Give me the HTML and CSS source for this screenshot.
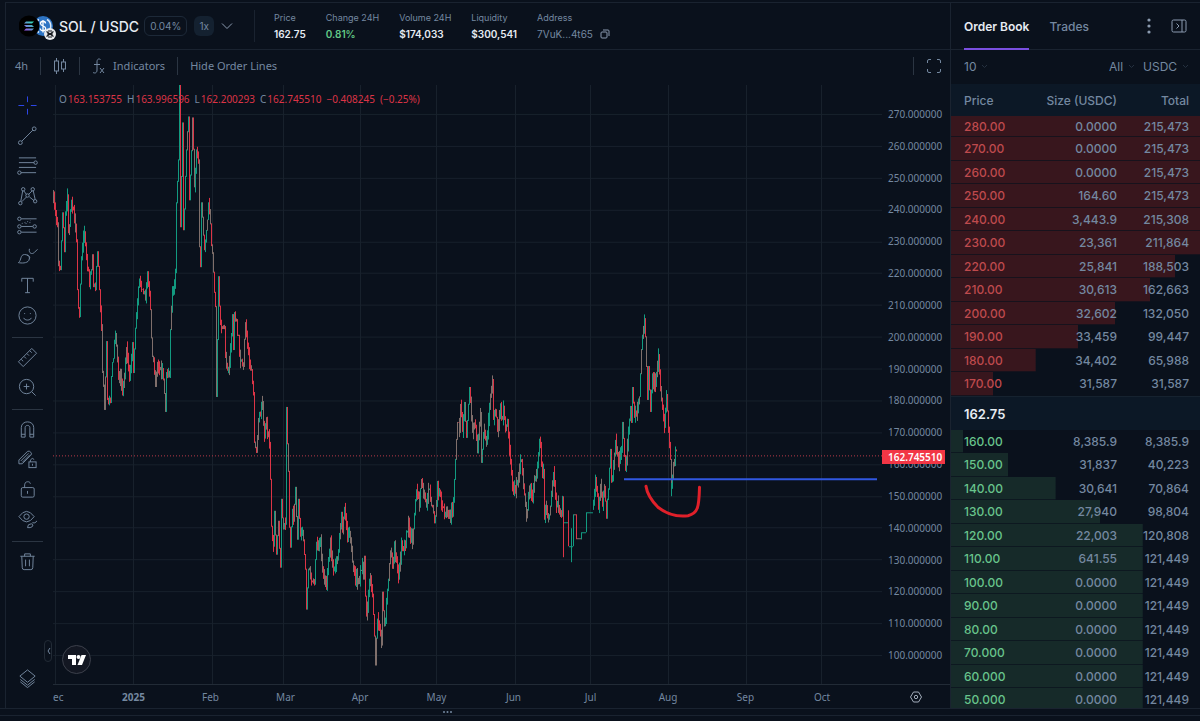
FILE: index.html
```html
<!DOCTYPE html>
<html lang="en">
<head>
    <meta charset="UTF-8">
    <meta name="viewport" content="width=device-width, initial-scale=1.0">
    <title>SOL / USDC</title>
    <link rel="stylesheet" href="styles.css">
</head>
<body>
    <div class="app">
        <main class="market">
            <header class="pair-bar">
                <svg class="pair-logo" width="38" height="26" viewBox="0 0 38 26">
                    <defs>
                        <linearGradient id="sol" x1="0" y1="1" x2="1" y2="0">
                            <stop offset="0" stop-color="#a04bf0"/>
                            <stop offset="1" stop-color="#22e6b0"/>
                        </linearGradient>
                    </defs>
                    <circle cx="24" cy="11" r="10" fill="#2d74c4"/>
                    <path d="M20 4.500a7.500 7.500 0 0 0 0 13M28 4.500a7.500 7.500 0 0 1 0 13" fill="none" stroke="#dbe8f8" stroke-width="1.500"/>
                    <path d="M26.500 8.500c0-3-5-3-5 0 0 3 5.200 2 5.200 5 0 3-5.400 3-5.400 0M24 5v12.500" fill="none" stroke="#fff" stroke-width="1.300"/>
                    <circle cx="10" cy="11" r="10.500" fill="#000"/>
                    <path d="M7 6.500h8l-2 2H5zM5 10h8l2 2H7zM7 13.500h8l-2 2H5z" fill="url(#sol)"/>
                    <circle cx="31" cy="19" r="6" fill="#e9ebee"/>
                    <path d="M27.500 16.500l7 5M34.500 16.500l-7 5M28 19h6M29 16h4M29 22h4" stroke="#15181e" stroke-width="1.200"/>
                </svg>
                <h1>SOL / USDC</h1>
                <span class="tag outlined">0.04%</span>
                <span class="tag">1x</span>
                <button class="icon-button" aria-label="Choose pair">
                    <svg width="12" height="8" viewBox="0 0 12 8"><path d="M1 1.500l5 5 5-5"/></svg>
                </button>
                <dl class="stats">
                    <div><dt>Price</dt><dd>162.75</dd></div>
                    <div><dt>Change 24H</dt><dd class="up">0.81%</dd></div>
                    <div><dt>Volume 24H</dt><dd>$174,033</dd></div>
                    <div><dt>Liquidity</dt><dd>$300,541</dd></div>
                    <div><dt>Address</dt><dd class="address">7VuK...4t65
                        <button class="icon-button" aria-label="Copy address">
                            <svg width="10" height="10" viewBox="0 0 10 10"><rect x="1" y="3" width="6" height="6" rx="1"/><path d="M3 1h5q1 0 1 1v5"/></svg>
                        </button></dd></div>
                </dl>
            </header>

            <div class="chart-toolbar">
                <button>4h</button>
                <i class="divider"></i>
                <button aria-label="Candles">
                    <svg width="14" height="18" viewBox="0 0 14 18"><path d="M3.500 1v3M3.500 14v3M10.500 2v3M10.500 12v3"/><rect x="1.500" y="4" width="4" height="10"/><rect x="8.500" y="5" width="4" height="7"/></svg>
                </button>
                <i class="divider"></i>
                <button class="indicators">
                    <svg width="14" height="18" viewBox="0 0 14 18"><path d="M8.500 2.500C6 1 5 3 5 5v8c0 3-2 3.500-4 2.500M2 7.500h6M8 11l4 5M12 11l-4 5"/></svg>
                    Indicators
                </button>
                <i class="divider"></i>
                <button>Hide Order Lines</button>
                <span class="spacer"></span>
                <i class="divider"></i>
                <button aria-label="Fullscreen">
                    <svg width="16" height="16" viewBox="0 0 16 16"><path d="M1.500 5V3q0-1.500 1.500-1.500h2M11 1.500h2q1.500 0 1.500 1.500v2M14.500 11v2q0 1.500-1.500 1.500h-2M5 14.500H3q-1.500 0-1.500-1.500v-2"/></svg>
                </button>
            </div>

            <div class="chart-body">
                <nav class="tools" aria-label="Drawing tools">
                    <button class="active" aria-label="Crosshair"><svg viewBox="0 0 22 22"><path d="M11 1.500v6M11 14.500v6M1.500 11h6M14.500 11h6"/></svg></button>
                    <button aria-label="Trend line"><svg viewBox="0 0 22 22"><path d="M5 17L16.500 5.500"/><circle cx="3.500" cy="18.500" r="2"/><circle cx="18" cy="4" r="2"/></svg></button>
                    <button aria-label="Fib retracement"><svg viewBox="0 0 22 22"><path d="M2 3h18M2 8h16M2 13h18M4 18.500h16"/><circle cx="19.500" cy="8" r="1.800"/><circle cx="2.500" cy="18.500" r="1.800"/></svg></button>
                    <button aria-label="Patterns"><svg viewBox="0 0 22 22"><path d="M4 17L6 6M7 6l3 4M5 17.500l5-5M12 10l4-4M13 12.500l5 4M17 6l2 9"/><circle cx="6.500" cy="4.500" r="1.800"/><circle cx="16.500" cy="4.500" r="1.800"/><circle cx="11" cy="11" r="1.800"/><circle cx="3.500" cy="19" r="1.800"/><circle cx="19" cy="17" r="1.800"/></svg></button>
                    <button aria-label="Position"><svg viewBox="0 0 22 22"><path d="M4.500 4h16M4.500 12h12M4.500 18h16"/><path d="M5 9l9-3M9 9h1M13 8h1"  stroke-dasharray="1 2"/><circle cx="2.500" cy="4" r="1.800"/><circle cx="2.500" cy="12" r="1.800"/><circle cx="18.500" cy="12" r="1.800"/><circle cx="2.500" cy="18" r="1.800"/></svg></button>
                    <button aria-label="Brush"><svg viewBox="0 0 22 22"><path d="M1.500 18.500C5 16 3 10 8 10c4 0 6 3 4.500 6-2 3.500-8 3-11 2.500zM13 4c-1 5 3 6 5 4l3.500-3.500M10.500 10.500c3 .5 3.500 3 2 4.500"/></svg></button>
                    <button aria-label="Text"><svg viewBox="0 0 22 22"><path d="M5 7V3.500h12V7M11 3.500v15M8.500 18.500h5"/></svg></button>
                    <button aria-label="Icons"><svg viewBox="0 0 22 22"><circle cx="11" cy="11" r="9"/><path d="M7 13.500c1 3 7 3 8 0M8 8.500v1M14 8.500v1"/></svg></button>
                    <hr>
                    <button aria-label="Measure"><svg viewBox="0 0 22 22"><path d="M1.500 15.500l14-14 5 5-14 14zM4.500 13l2 2M7.500 10l2 2M10.500 7l2 2M13.500 4l2 2"/></svg></button>
                    <button aria-label="Zoom in"><svg viewBox="0 0 22 22"><circle cx="10" cy="10" r="7.500"/><path d="M15.500 15.500l4 4M10 7v6M7 10h6"/></svg></button>
                    <hr>
                    <button aria-label="Magnet"><svg viewBox="0 0 22 22"><path d="M4.500 19V9c0-8 13-8 13 0v10h-4V9c0-3-5-3-5 0v10zM4.500 16h4M13.500 16h4"/></svg></button>
                    <button aria-label="Keep drawing"><svg viewBox="0 0 22 22"><path d="M2 15.500v-4l9-9q2-1 3.500 1 1.500 1.500 0 3l-9 9zM4 12.500l8-8M5.500 14l8-8"/><rect x="12.500" y="13.500" width="7.500" height="6"/><path d="M14 13.500v-2q2-3 4-.5M16.200 15.500v2"/></svg></button>
                    <button aria-label="Lock"><svg viewBox="0 0 22 22"><rect x="4.500" y="9" width="13.500" height="10" rx="1.500"/><path d="M8 9V6c0-4 6-4 6-1M11 12.500v3"/></svg></button>
                    <button aria-label="Hide drawings"><svg viewBox="0 0 22 22"><path d="M2 8q8-11 16 0-8 11-16 0z"/><circle cx="10" cy="8" r="2.800"/><path d="M11 19.500q0-4 4-4 3 1 1 3-2 1.500-5 1zM16 14.500q3 1 5-2"/></svg></button>
                    <hr>
                    <button aria-label="Remove"><svg viewBox="0 0 22 22"><path d="M3.500 5.500h15M8 5.500V3h6v2.500M5 5.500l.5 12q0 2 2 2h7q2 0 2-2l.5-12M9 9v7M13 9v7"/></svg></button>
                    <button class="last" aria-label="Objects"><svg viewBox="0 0 22 22"><path d="M3 8.500L11 2l8 6.500-8 6.500zM3.500 12l7.500 6 7.500-6M3.500 14.500l7.500 6 7.500-6"/></svg></button>
                </nav>

                <div class="plot">
                    <svg id="chart" viewBox="53 85 829 600" preserveAspectRatio="none">
                        <g id="grid"></g>
                        <g id="candles"></g>
                        <path class="last-price" d="M53 456.500H882"/>
                        <path class="support" d="M624 480H877"/>
                        <path class="scribble" d="M646 487C647 494 652 502 658 508C667 515 676 518 688 516.500C698 514 699 508 699.500 488"/>
                    </svg>
                    <p class="ohlc">
                        <span>O<b>163.153755</b></span>
                        <span>H<b>163.996596</b></span>
                        <span>L<b>162.200293</b></span>
                        <span>C<b>162.745510</b></span>
                        <b>−0.408245</b>
                        <b>(−0.25%)</b>
                    </p>
                    <button class="collapse" aria-label="Collapse tools">
                        <svg width="4" height="8" viewBox="0 0 4 8"><path d="M3 1L1 4l2 3"/></svg>
                    </button>
                    <a class="tv-logo" href="#" aria-label="TradingView">
                        <svg width="18" height="10" viewBox="0 0 18 10"><path d="M0 0h8v10H4V4H0z"/><circle cx="10.500" cy="2" r="2"/><path d="M13.500 0H18l-4 10H9.500z"/></svg>
                    </a>
                </div>
                <div class="price-axis">
                    <span>270.000000</span><span>260.000000</span><span>250.000000</span>
                    <span>240.000000</span><span>230.000000</span><span>220.000000</span>
                    <span>210.000000</span><span>200.000000</span><span>190.000000</span>
                    <span>180.000000</span><span>170.000000</span><span>160.000000</span>
                    <span>150.000000</span><span>140.000000</span><span>130.000000</span>
                    <span>120.000000</span><span>110.000000</span><span>100.000000</span>
                    <strong class="price-tag">162.745510</strong>
                </div>
                <div class="time-axis">
                    <span>ec</span><b>2025</b><span>Feb</span><span>Mar</span><span>Apr</span><span>May</span>
                    <span>Jun</span><span>Jul</span><span>Aug</span><span>Sep</span><span>Oct</span>
                </div>
                <button class="axis-settings" aria-label="Chart settings">
                    <svg width="12" height="12" viewBox="0 0 12 12"><path d="M3.500 1h5L11.500 6l-3 5h-5L.5 6z"/><circle cx="6" cy="6" r="1.700"/></svg>
                </button>
            </div>
        </main>

        <aside class="book">
            <div class="book-tabs">
                <button class="selected">Order Book</button>
                <button>Trades</button>
                <span class="spacer"></span>
                <button class="icon-button" aria-label="More">
                    <svg class="dots" width="4" height="16" viewBox="0 0 4 16"><circle cx="2" cy="2" r="1.600"/><circle cx="2" cy="8" r="1.600"/><circle cx="2" cy="14" r="1.600"/></svg>
                </button>
                <button class="icon-button" aria-label="Hide panel">
                    <svg width="16" height="14" viewBox="0 0 16 14"><rect x="1" y="1" width="14" height="12" rx="1.500"/><path d="M11 1v12M5.500 4.500L8 7l-2.500 2.500"/></svg>
                </button>
            </div>
            <div class="book-filters">
                <label><select aria-label="Grouping"><option>10</option></select><svg width="7" height="5" viewBox="0 0 7 5"><path d="M1 1l2.500 2.500L6 1"/></svg></label>
                <span class="spacer"></span>
                <label><select aria-label="Side"><option>All</option></select><svg width="7" height="5" viewBox="0 0 7 5"><path d="M1 1l2.500 2.500L6 1"/></svg></label>
                <label><select aria-label="Currency"><option>USDC</option></select><svg width="7" height="5" viewBox="0 0 7 5"><path d="M1 1l2.500 2.500L6 1"/></svg></label>
            </div>
            <table>
                <thead>
                    <tr><th>Price</th><th>Size (USDC)</th><th>Total</th></tr>
                </thead>
                <tbody class="asks">
                    <tr style="--depth: 100%"><td>280.00</td><td>0.0000</td><td>215,473</td></tr>
                    <tr style="--depth: 100%"><td>270.00</td><td>0.0000</td><td>215,473</td></tr>
                    <tr style="--depth: 100%"><td>260.00</td><td>0.0000</td><td>215,473</td></tr>
                    <tr style="--depth: 100%"><td>250.00</td><td>164.60</td><td>215,473</td></tr>
                    <tr style="--depth: 100%"><td>240.00</td><td>3,443.9</td><td>215,308</td></tr>
                    <tr style="--depth: 100%"><td>230.00</td><td>23,361</td><td>211,864</td></tr>
                    <tr style="--depth: 90%"><td>220.00</td><td>25,841</td><td>188,503</td></tr>
                    <tr style="--depth: 80%"><td>210.00</td><td>30,613</td><td>162,663</td></tr>
                    <tr style="--depth: 66%"><td>200.00</td><td>32,602</td><td>132,050</td></tr>
                    <tr style="--depth: 51%"><td>190.00</td><td>33,459</td><td>99,447</td></tr>
                    <tr style="--depth: 34%"><td>180.00</td><td>34,402</td><td>65,988</td></tr>
                    <tr style="--depth: 17%"><td>170.00</td><td>31,587</td><td>31,587</td></tr>
                </tbody>
                <tbody class="mid">
                    <tr><th colspan="3">162.75</th></tr>
                </tbody>
                <tbody class="bids">
                    <tr style="--depth: 5%"><td>160.00</td><td>8,385.9</td><td>8,385.9</td></tr>
                    <tr style="--depth: 23%"><td>150.00</td><td>31,837</td><td>40,223</td></tr>
                    <tr style="--depth: 42%"><td>140.00</td><td>30,641</td><td>70,864</td></tr>
                    <tr style="--depth: 60%"><td>130.00</td><td>27,940</td><td>98,804</td></tr>
                    <tr style="--depth: 77%"><td>120.00</td><td>22,003</td><td>120,808</td></tr>
                    <tr style="--depth: 77%"><td>110.00</td><td>641.55</td><td>121,449</td></tr>
                    <tr style="--depth: 77%"><td>100.00</td><td>0.0000</td><td>121,449</td></tr>
                    <tr style="--depth: 77%"><td>90.00</td><td>0.0000</td><td>121,449</td></tr>
                    <tr style="--depth: 77%"><td>80.00</td><td>0.0000</td><td>121,449</td></tr>
                    <tr style="--depth: 77%"><td>70.000</td><td>0.0000</td><td>121,449</td></tr>
                    <tr style="--depth: 77%"><td>60.000</td><td>0.0000</td><td>121,449</td></tr>
                    <tr style="--depth: 77%"><td>50.000</td><td>0.0000</td><td>121,449</td></tr>
                </tbody>
            </table>
        </aside>

        <div class="resizer">
            <svg class="dots" width="9" height="2" viewBox="0 0 9 2"><circle cx="1" cy="1" r="1"/><circle cx="4.500" cy="1" r="1"/><circle cx="8" cy="1" r="1"/></svg>
        </div>
    </div>
    <script src="chart.js"></script>
</body>
</html>
```
FILE: styles.css
```css
* {
    box-sizing: border-box;
}

body {
    margin: 0;
    background-color: #0a111c;
    color: #7488a0;
    font-family: Inter, sans-serif;
    font-size: 13px;
}

button, select {
    background: none;
    border: none;
    padding: 0;
    margin: 0;
    color: inherit;
    font: inherit;
    cursor: pointer;
}

svg {
    display: block;
    fill: none;
    stroke: currentColor;
}

.dots {
    fill: currentColor;
    stroke: none;
}

.spacer {
    flex: 1;
}

.app {
    min-height: 100vh;
    display: grid;
    grid-template-columns: 1fr 250px;
    grid-template-rows: 1fr 8px;
    padding: 2px 0 5px;
}

.market {
    display: flex;
    flex-direction: column;
    min-width: 0;
    margin-left: 5px;
    border-left: 1px solid #1a2330;
    border-top: 1px solid #1a2330;
}

/* pair header */

.pair-bar {
    height: 47px;
    display: flex;
    align-items: center;
    padding-left: 13px;
    border-bottom: 1px solid #1a2330;
}

.pair-logo {
    stroke: none;
    margin-top: 4px;
}

h1 {
    margin: 0 5px 0 2px;
    color: #e6ebf2;
    font-size: 14px;
    font-weight: 500;
}

.tag {
    height: 20px;
    padding: 0 5px;
    margin-right: 7px;
    border-radius: 6px;
    background-color: #142130;
    font-size: 10px;
    line-height: 20px;
}

.tag.outlined {
    background: none;
    border: 1px solid #1d2938;
    line-height: 18px;
}

.icon-button {
    color: #8b9bb0;
}

.stats {
    display: flex;
    gap: 20px;
    margin: 0 0 0 21px;
    padding-left: 19px;
    border-left: 1px solid #1a2330;
    font-size: 9px;
    line-height: 16px;
}

.stats dd {
    margin: 0;
    color: #e6ebf2;
    font-size: 10px;
    font-weight: 600;
}

.stats dd.up {
    color: #62c987;
}

.stats dd.address {
    display: flex;
    align-items: center;
    gap: 7px;
    color: #7488a0;
    font-weight: 400;
}

/* chart */

.chart-toolbar {
    height: 35px;
    display: flex;
    align-items: center;
    gap: 12px;
    padding: 0 8px 4px 9px;
    font-family: "Noto Sans", sans-serif;
    font-size: 11px;
}

.indicators {
    display: flex;
    align-items: center;
    gap: 7px;
}

.divider {
    width: 1px;
    height: 18px;
    background-color: #2b3542;
}

.chart-body {
    flex: 1;
    display: grid;
    grid-template-columns: 47px 1fr 68px;
    grid-template-rows: 1fr 23px;
    font-family: "Noto Sans", sans-serif;
    font-size: 10px;
}

.tools {
    grid-row: 1 / 3;
    display: flex;
    flex-direction: column;
    align-items: center;
    padding: 6px 4px 14px 0;
}

.tools button {
    padding: 4px 0;
    margin-bottom: 1px;
}

.tools svg {
    width: 21px;
    height: 21px;
}

.tools .active {
    color: #2f49f0;
}

.tools hr {
    width: 31px;
    margin: 6px 0 5px;
    border: none;
    border-top: 1px solid #2b3542;
}

.tools .last {
    margin-top: auto;
}

.plot {
    position: relative;
    border-bottom: 1px solid #222b36;
}

#chart {
    position: absolute;
    width: 100%;
    height: 100%;
}

#chart path {
    vector-effect: non-scaling-stroke;
}

#grid, #candles {
    shape-rendering: crispEdges;
}

#grid {
    stroke: #18212c;
}

.up-bar {
    stroke: #129a80;
}

.down-bar {
    stroke: #dc3446;
}

.mixed-bar {
    stroke: #7f6f6b;
}

.last-price {
    stroke: #b83a48;
    stroke-dasharray: 1 2;
}

.support {
    stroke: #3157e0;
    stroke-width: 2;
}

.scribble {
    stroke: #e0202a;
    stroke-width: 3;
    stroke-linecap: round;
}

.ohlc {
    position: absolute;
    top: 7px;
    left: 6px;
    display: flex;
    gap: 5px;
    margin: 0;
    line-height: 14px;
}

.ohlc b {
    color: #dc3446;
    font-weight: 400;
}

.ohlc span b {
    margin-left: 1px;
}

.collapse {
    position: absolute;
    left: -9px;
    bottom: 22px;
    width: 8px;
    height: 22px;
    padding-left: 2px;
    border: 1px solid #222b36;
    border-radius: 4px;
}

.tv-logo {
    position: absolute;
    left: 9px;
    bottom: 10px;
    width: 29px;
    height: 29px;
    display: flex;
    align-items: center;
    justify-content: center;
    border: 1px solid #3c404b;
    border-radius: 50%;
    background-color: #131722;
}

.tv-logo svg {
    fill: #fff;
    stroke: none;
}

.price-axis {
    position: relative;
    display: flex;
    flex-direction: column;
    padding: 13px 0 13px 6px;
    border-bottom: 1px solid #222b36;
}

.price-axis span {
    flex: 1;
    display: flex;
    align-items: center;
}

.price-tag {
    position: absolute;
    top: 61%;
    left: 0;
    right: 5px;
    height: 14px;
    padding-left: 6px;
    background-color: #f23645;
    color: #fff;
    font-weight: 600;
    line-height: 14px;
}

.time-axis {
    grid-column: 2;
    display: grid;
    grid-template-columns: 42fr 77fr 77fr 73fr 76fr 77fr 77fr 77fr 78fr 77fr 76fr;
    align-items: center;
    justify-items: center;
    padding-right: 22px;
}

.time-axis span:first-child {
    justify-self: start;
}

.axis-settings {
    justify-self: center;
    color: #a2adbb;
}

/* order book */

.book {
    height: 0;
    min-height: 100%;
    border-left: 1px solid #1a2330;
    border-top: 1px solid #1a2330;
    overflow: hidden;
}

.book-tabs {
    height: 47px;
    display: flex;
    gap: 20px;
    padding: 0 13px;
    border-bottom: 1px solid #1a2330;
    font-size: 12px;
    font-weight: 500;
}

.book-tabs .selected {
    color: #e6ebf2;
    font-weight: 600;
    box-shadow: 0 1px #7a4fe0, inset 0 -1px #7a4fe0;
}

.book-filters {
    height: 34px;
    display: flex;
    align-items: center;
    gap: 8px;
    padding: 0 11px 2px 13px;
    font-size: 12px;
}

.book-filters label {
    display: flex;
    align-items: center;
    gap: 4px;
}

.book-filters select {
    appearance: none;
}

.book-filters svg {
    color: #253140;
}

.book table {
    width: 100%;
    border-collapse: separate;
    border-spacing: 0;
    font-size: 12px;
    font-weight: 500;
}

.book th, .book td {
    padding: 0;
    text-align: right;
}

.book th {
    font-weight: 500;
    background-color: #0c1826;
}

.book td {
    border-bottom: 1px solid rgba(10, 17, 28, 0.7);
}

.book th:first-child, .book td:first-child {
    width: 80px;
    padding-left: 13px;
    text-align: left;
}

.book th:last-child, .book td:last-child {
    width: 83px;
    padding-right: 11px;
}

.book thead tr {
    height: 32px;
}

.book tbody tr {
    height: 23px;
    background: linear-gradient(var(--bar), var(--bar)) no-repeat 0 0 / var(--depth) 100%;
}

.book tbody tr:nth-child(even) {
    height: 24px;
}

.book .asks tr:first-child {
    height: 21px;
}

.book .mid tr {
    height: 34px;
}

.book .mid th {
    border-top: 1px solid #16222f;
    color: #e6ebf2;
    font-size: 13px;
    font-weight: 600;
}

.asks {
    --bar: #38161d;
}

.asks td:first-child {
    color: #bf4a4d;
}

.bids {
    --bar: #162a29;
}

.bids td:first-child {
    color: #68c48c;
}

.resizer {
    grid-column: 1 / 3;
    display: flex;
    justify-content: center;
    padding: 2px 306px 0 0;
    border-top: 1px solid #1a2330;
    border-bottom: 1px solid #1a2330;
}
```
FILE: chart.js
```js
const SVG = "http://www.w3.org/2000/svg";

// turning points of the 4h series: x, y pairs in chart units
const points = [
    53,197, 56,214, 58,223, 59,266, 61,270, 63,213, 65,252, 66,212, 68,195, 69,233, 72,202, 75,220, 77,240, 78,290, 80,317, 82,257,
    85,232, 87,257, 89,270, 90,287, 93,255, 94,287, 96,290, 98,252, 100,290, 102,325, 103,373, 105,410, 107,342, 108,400, 111,403,
    113,363, 116,335, 119,375, 124,388, 127,348, 130,380, 133,343, 134,373, 137,313, 140,280, 143,290, 146,298, 148,272, 151,310,
    153,357, 156,387, 158,367, 163,370, 166,412, 167,373, 170,378, 171,330, 173,293, 176,273, 177,203, 179,160, 180,85, 181,227,
    183,123, 184,230, 187,150, 189,117, 190,200, 193,118, 195,187, 197,150, 199,160, 200,247, 201,267, 202,203, 205,250, 209,203,
    213,253, 216,307, 217,397, 218,340, 219,277, 221,325, 225,327, 226,358, 229,370, 231,350, 233,315, 234,350, 235,313, 237,320,
    241,362, 244,367, 246,323, 249,353, 252,370, 254,393, 255,443, 257,453, 259,423, 263,402, 265,438, 267,423, 270,443, 271,480,
    272,527, 274,547, 275,512, 277,555, 279,522, 281,568, 282,500, 284,530, 286,525, 287,408, 289,472, 290,528, 291,548, 293,510,
    294,522, 296,488, 298,540, 299,500, 301,537, 303,532, 306,570, 307,610, 309,570, 312,582, 315,585, 317,543, 321,542, 323,573,
    327,585, 331,543, 334,572, 339,553, 342,513, 343,533, 345,508, 348,537, 350,532, 353,563, 356,582, 359,580, 363,563, 364,580,
    365,557, 366,597, 367,617, 370,580, 373,595, 375,637, 376,666, 378,620, 382,646, 383,593, 385,627, 388,590, 391,552, 393,568,
    395,547, 399,578, 402,545, 406,547, 409,523, 413,545, 416,502, 417,490, 420,508, 422,480, 427,507, 430,490, 433,507, 435,523,
    438,488, 443,507, 448,514, 451,520, 454,503, 456,460, 458,423, 460,433, 461,405, 463,432, 465,403, 467,438, 470,388, 473,433,
    475,423, 478,448, 481,413, 482,463, 484,433, 487,443, 490,410, 493,380, 494,420, 496,410, 498,432, 501,407, 503,420, 504,407,
    506,430, 508,420, 511,460, 513,487, 516,493, 518,483, 521,460, 523,473, 526,507, 527,518, 529,493, 533,498, 537,473, 540,443,
    541,443, 542,467, 544,470, 545,520, 547,508, 549,520, 551,507, 554,473, 556,500, 558,503, 562,517, 563,497
];

// thinly traded days, drawn without noise
const steps = [
    ["down", "M563.5 497V558"], ["up", "M564 523.5H568"], ["down", "M568.5 511V547"], ["up", "M569 547.5H573"],
    ["up", "M571.5 529V563"], ["up", "M573.5 547V515"], ["mixed", "M574 515.5H576"], ["down", "M576.5 515V540"],
    ["mixed", "M577 539.5H582"], ["up", "M581.5 540V533"], ["up", "M582 533.5H586"], ["up", "M586.5 533V513"], ["up", "M587 513.5H593"]
];

const recent = [
    593,508, 596,480, 599,510, 601,485, 603,507, 605,487, 607,519, 609,490, 611,450, 612,483, 614,467, 616,441, 619,465, 622,453,
    623,423, 625,457, 626,470, 629,433, 631,407, 632,423, 633,388, 635,417, 638,408, 640,397, 642,350, 644,330, 645,319, 647,367,
    648,400, 649,367, 651,412, 653,377, 656,387, 659,355, 661,387, 663,407, 665,428, 667,395, 669,433, 671,460, 671,496, 673,480,
    674,463, 677,452
];

let seed = 7;
function random() {
    seed = (seed * 16807) % 2147483647;
    return seed / 2147483647;
}

function addPath(parent, d, name) {
    const path = document.createElementNS(SVG, "path");
    path.setAttribute("d", d);
    if (name) path.setAttribute("class", name);
    parent.appendChild(path);
}

function drawSeries(series) {
    const candles = document.getElementById("candles");
    let lastY = series[1];
    for (let i = 0; i < series.length - 2; i += 2) {
        const [x0, y0, x1, y1] = series.slice(i, i + 4);
        const count = Math.max(1, x1 - x0);
        for (let n = 1; n <= count; n++) {
            const x = x0 + n - 0.5;
            const noise = n < count ? (random() - 0.5) * 12 : 0;
            const y = y0 + (y1 - y0) * n / count + noise;
            const wick = Math.abs(y - lastY) < 14 ? random() * 14 : 1;
            const top = Math.min(y, lastY) - wick / 2;
            const bottom = Math.max(y, lastY) + wick / 2;
            let name = y < lastY ? "up-bar" : "down-bar";
            if (random() < 0.3) name = "mixed-bar";
            addPath(candles, `M${x} ${top.toFixed(1)}V${bottom.toFixed(1)}`, name);
            lastY = y;
        }
    }
}

function drawGrid() {
    const grid = document.getElementById("grid");
    for (let i = 0; i < 18; i++) {
        addPath(grid, `M53 ${Math.round(114 + i * 31.88) + 0.5}H882`);
    }
    for (const x of [55, 133, 212, 283, 360, 436, 515, 590, 668, 746, 821]) {
        addPath(grid, `M${x + 0.5} 85V685`);
    }
}

drawGrid();
drawSeries(points);
for (const [side, d] of steps) {
    addPath(document.getElementById("candles"), d, side + "-bar");
}
drawSeries(recent);
```
